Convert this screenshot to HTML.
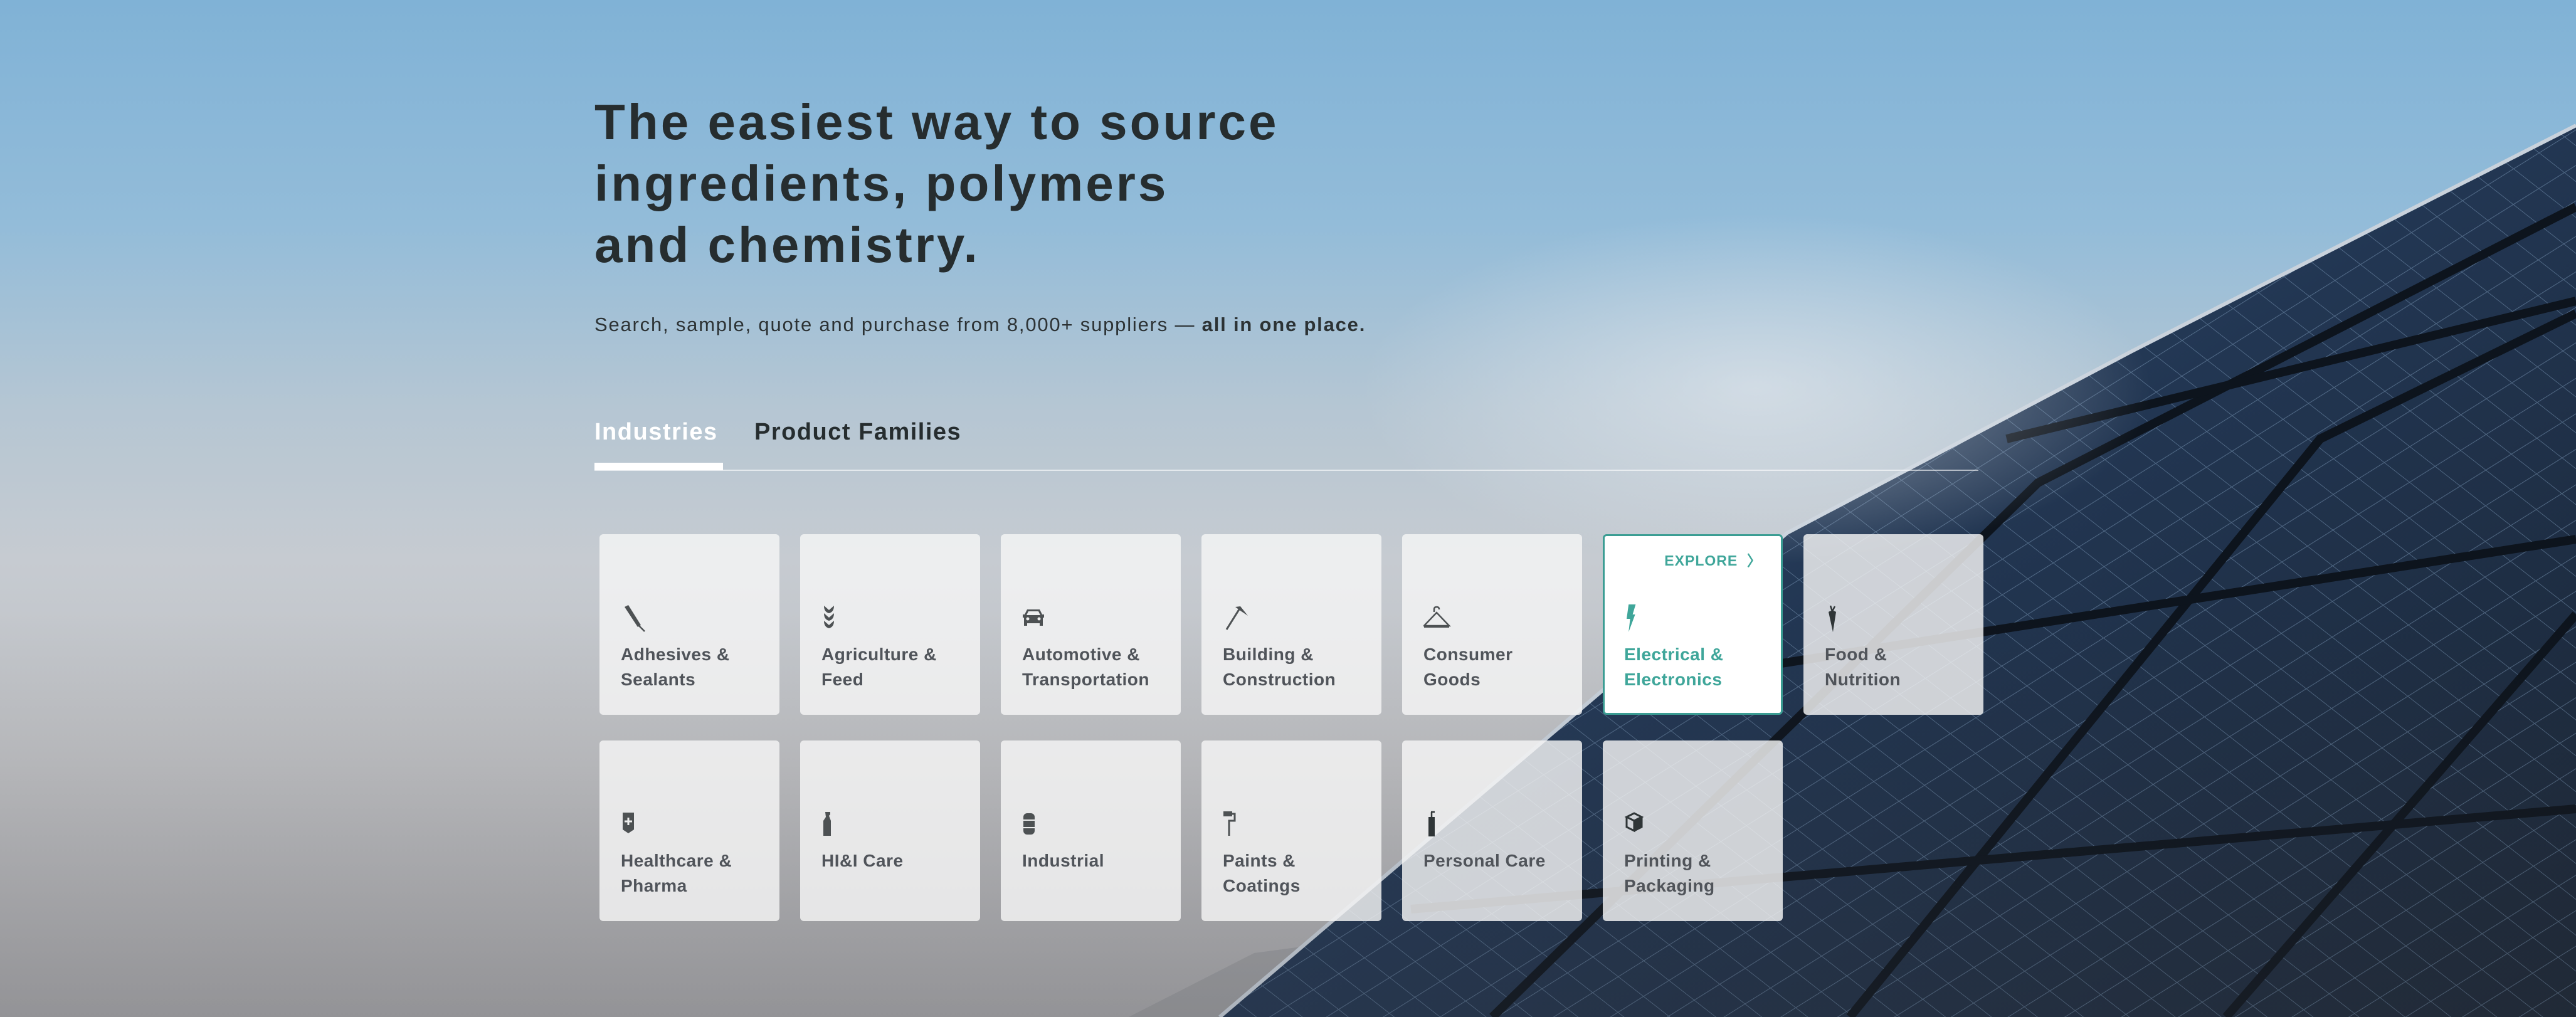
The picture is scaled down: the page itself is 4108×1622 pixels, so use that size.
<!DOCTYPE html>
<html><head><meta charset="utf-8"><style>
html,body{margin:0;padding:0}
body{width:4108px;height:1622px;overflow:hidden;position:relative;font-family:"Liberation Sans",sans-serif;
background:linear-gradient(180deg,#80b2d6 0%,#93bcd9 22%,#b5c6d3 40%,#c6cbd1 55%,#bfc0c3 75%,#a9a9ac 100%);}
.bgfade{position:absolute;left:0;top:0;width:4108px;height:1622px;
background:radial-gradient(ellipse 900px 400px at 2800px 620px,rgba(235,238,242,.55),rgba(235,238,242,0) 70%),
linear-gradient(180deg,rgba(0,0,0,0) 60%,rgba(60,60,65,.2) 100%);}
svg.bg{position:absolute;left:0;top:0}
h1{position:absolute;left:948px;top:146px;margin:0;font-size:80px;line-height:98px;font-weight:700;color:#262d2f;letter-spacing:4px}
.sub{position:absolute;left:948px;top:500px;font-size:31px;color:#2c3234;margin:0;letter-spacing:1.8px}
.sub b{font-weight:700}
.tab{position:absolute;top:668px;font-size:38px;font-weight:700;letter-spacing:1.5px}
.line{position:absolute;left:948px;top:749px;width:2207px;height:2px;background:rgba(255,255,255,.6)}
.bar{position:absolute;left:948px;top:738px;width:205px;height:12px;background:#fff}
.card{position:absolute;width:287px;height:288px;border-radius:6px;background:rgba(245,245,245,.82);box-sizing:border-box}
.card .ic{position:absolute;left:34px;top:112px;width:44px;height:44px}
.card .t{position:absolute;left:34px;top:172px;font-size:28px;line-height:40px;color:#50545a;font-weight:700;letter-spacing:.5px}
.card.hi{background:#fff;border:3px solid #3b9d93}
.card.hi .t{color:#3fa69a;left:31px;top:169px}
.card.hi .ic{left:31px;top:109px}
.exp{position:absolute;right:30px;top:20px;font-size:23px;color:#3fa69a;font-weight:700;letter-spacing:1px}
</style></head><body>
<svg class="bg" width="4108" height="1622">
<defs>
<linearGradient id="pg" x1="0" y1="0" x2="1" y2="1"><stop offset="0" stop-color="#34547a"/><stop offset=".5" stop-color="#223652"/><stop offset="1" stop-color="#1a2534"/></linearGradient>
<pattern id="grid" width="48" height="48" patternUnits="userSpaceOnUse" patternTransform="rotate(-32) skewX(20)">
<path d="M0 0H48M0 0V48" stroke="#8aa8c8" stroke-width="2" opacity=".45"/></pattern>
</defs>
<path d="M1800 1622 L2000 1520 L2300 1480 L2500 1560 L2500 1622Z" fill="#8f9196" opacity=".5"/>
<polygon points="1945,1622 2850,850 3400,560 4108,200 4108,1622" fill="url(#pg)"/>
<polygon points="1945,1622 2850,850 3400,560 4108,200 4108,1622" fill="url(#grid)"/>
<g stroke="#0d141d" stroke-width="14" fill="none">
<path d="M2380 1622 L3250 770 L4108 330"/>
<path d="M2950 1622 L3700 700 L4108 500"/>
<path d="M3550 1622 L4108 980"/>
<path d="M2250 1450 L4108 1290"/>
<path d="M2700 1080 L4108 860"/>
<path d="M3200 700 L4108 480"/>
</g>
<path d="M1945 1622 L2850 850 L3400 560 L4108 200" stroke="#c9d2dc" stroke-width="6" fill="none"/>
</svg>
<div class="bgfade"></div>

<h1>The easiest way to source<br>ingredients, polymers<br>and chemistry.</h1>
<p class="sub">Search, sample, quote and purchase from 8,000+ suppliers — <b>all in one place.</b></p>
<div class="tab" style="left:948px;color:#fff">Industries</div>
<div class="tab" style="left:1203px;color:#262d2f">Product Families</div>
<div class="line"></div><div class="bar"></div>

<!-- row 1 -->
<div class="card" style="left:956px;top:852px">
<svg class="ic" viewBox="0 0 44 44"><path d="M6 4 L12 1 L32 33 L27 36Z" fill="#4d5153"/><path d="M29 34 L38 43" stroke="#4d5153" stroke-width="2.5"/></svg>
<div class="t">Adhesives &amp;<br>Sealants</div></div>
<div class="card" style="left:1276px;top:852px">
<svg class="ic" viewBox="0 0 44 44"><g fill="#4d5153"><path d="M4 2 Q4 12 12 14 Q20 12 20 2 L12 9Z"/><path d="M4 14 Q4 24 12 26 Q20 24 20 14 L12 21Z"/><path d="M4 26 Q4 36 12 38 Q20 36 20 26 L12 33Z"/></g></svg>
<div class="t">Agriculture &amp;<br>Feed</div></div>
<div class="card" style="left:1596px;top:852px">
<svg class="ic" viewBox="0 0 44 44"><path d="M4 16 L8 8 H28 L32 16 H35 V21 H33 V34 H28 V30 H8 V34 H3 V21 H1 V16Z M10 11 L7 17 H29 L26 11Z" fill="#4d5153" fill-rule="evenodd"/><circle cx="9" cy="23" r="2.5" fill="#eee"/><circle cx="27" cy="23" r="2.5" fill="#eee"/></svg>
<div class="t">Automotive &amp;<br>Transportation</div></div>
<div class="card" style="left:1916px;top:852px">
<svg class="ic" viewBox="0 0 44 44"><path d="M6 40 L26 8" stroke="#4d5153" stroke-width="3"/><path d="M20 4 L28 3 L40 18 L34 14 L28 10Z" fill="#4d5153"/></svg>
<div class="t">Building &amp;<br>Construction</div></div>
<div class="card" style="left:2236px;top:852px">
<svg class="ic" viewBox="0 0 44 44"><path d="M20 12 V8 Q20 4 24 4 Q28 4 28 8 M24 13 L4 34 H44 Z" stroke="#4d5153" stroke-width="2.5" fill="none" transform="translate(-3,0)"/><path d="M1 34 H41 V37 H1Z" fill="#4d5153"/></svg>
<div class="t">Consumer<br>Goods</div></div>
<div class="card hi" style="left:2556px;top:852px">
<div class="exp">EXPLORE&nbsp;&nbsp;〉</div>
<svg class="ic" viewBox="0 0 44 44"><path d="M14 0 H28 L22 16 H27 L14 44 L17 23 H10Z" fill="#3fa69a" transform="translate(-4,0) scale(.8,1)"/></svg>
<div class="t">Electrical &amp;<br>Electronics</div></div>
<div class="card" style="left:2876px;top:852px">
<svg class="ic" viewBox="0 0 44 44"><path d="M6 12 Q12 8 18 12 L13 44 Z" fill="#2f3537"/><path d="M12 11 L9 2 M12 11 L16 3" stroke="#2f3537" stroke-width="2.5"/></svg>
<div class="t">Food &amp;<br>Nutrition</div></div>

<!-- row 2 -->
<div class="card" style="left:956px;top:1181px">
<svg class="ic" viewBox="0 0 44 44"><path d="M3 3 H21 V30 L12 36 L3 30Z" fill="#4d5153"/><path d="M12 11 V23 M6 17 H18" stroke="#eee" stroke-width="3"/></svg>
<div class="t">Healthcare &amp;<br>Pharma</div></div>
<div class="card" style="left:1276px;top:1181px">
<svg class="ic" viewBox="0 0 44 44"><path d="M6 2 H14 V6 L12 8 L15 16 V40 H3 V16 L7 10 Z" fill="#4d5153"/></svg>
<div class="t">HI&amp;I Care</div></div>
<div class="card" style="left:1596px;top:1181px">
<svg class="ic" viewBox="0 0 44 44"><rect x="2" y="4" width="18" height="34" rx="6" fill="#4d5153"/><path d="M2 15 H20 M2 27 H20" stroke="#eee" stroke-width="2"/></svg>
<div class="t">Industrial</div></div>
<div class="card" style="left:1916px;top:1181px">
<svg class="ic" viewBox="0 0 44 44"><rect x="1" y="1" width="14" height="8" fill="#4d5153"/><path d="M15 5 H19 V16 H10 V40" stroke="#4d5153" stroke-width="3" fill="none"/></svg>
<div class="t">Paints &amp;<br>Coatings</div></div>
<div class="card" style="left:2236px;top:1181px">
<svg class="ic" viewBox="0 0 44 44"><path d="M12 2 H18 M13 2 V10" stroke="#2f3537" stroke-width="2.5"/><rect x="8" y="10" width="10" height="31" fill="#2f3537"/></svg>
<div class="t">Personal Care</div></div>
<div class="card" style="left:2556px;top:1181px">
<svg class="ic" viewBox="0 0 44 44"><path d="M4 10 L16 4 L28 10 L16 16Z M4 10 V26 L16 32 V16 M28 10 V26 L16 32" stroke="#2f3537" stroke-width="3" fill="none"/><path d="M16 16 L28 10 L28 26 L16 32Z" fill="#2f3537"/></svg>
<div class="t">Printing &amp;<br>Packaging</div></div>
</body></html>
